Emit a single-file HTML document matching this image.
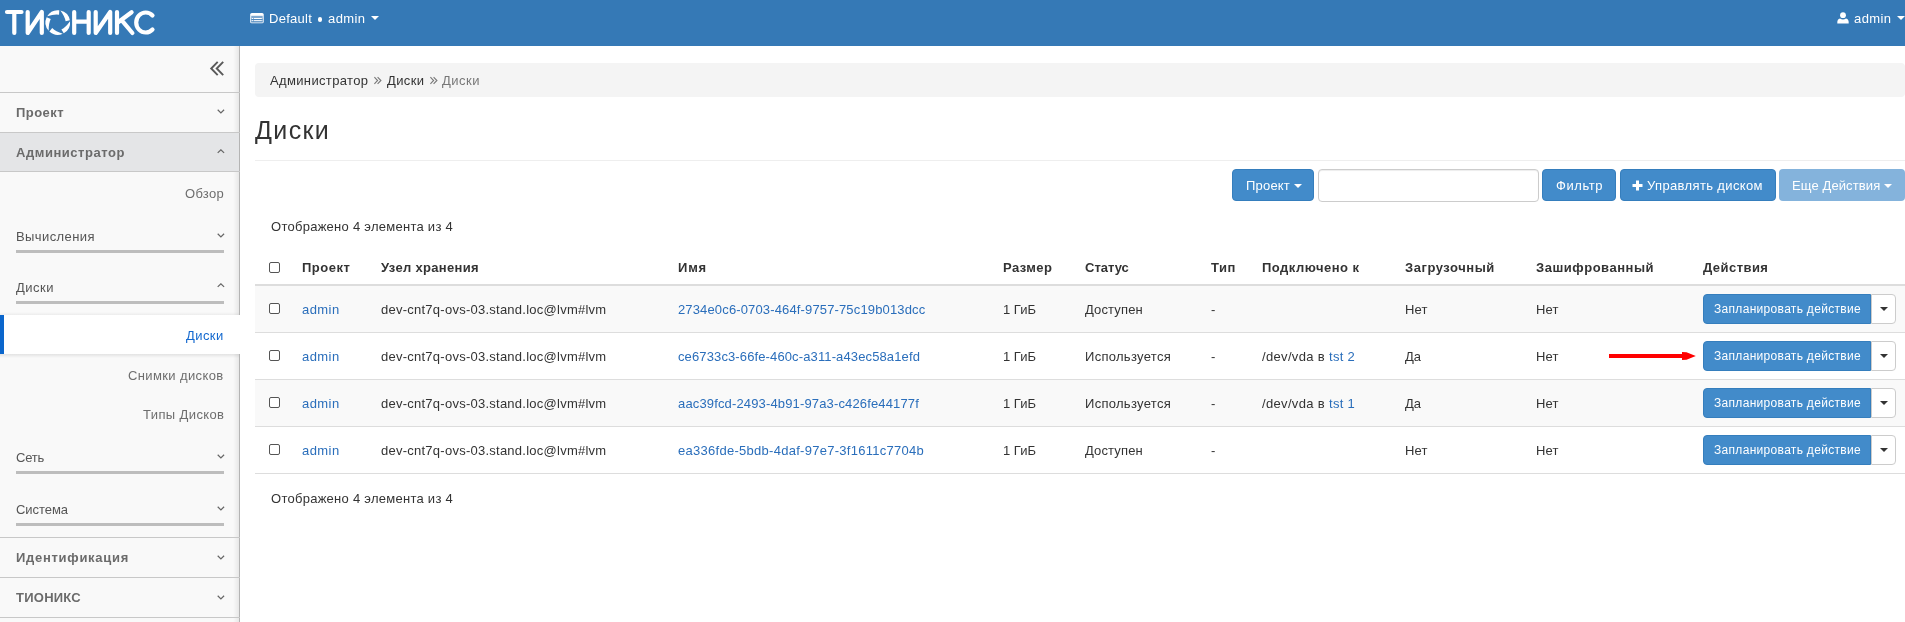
<!DOCTYPE html>
<html><head><meta charset="utf-8"><style>
html,body{margin:0;padding:0;}
body{width:1905px;height:622px;overflow:hidden;position:relative;background:#fff;font-family:"Liberation Sans",sans-serif;-webkit-font-smoothing:antialiased;}
.t{position:absolute;white-space:nowrap;will-change:transform;}
.r{position:absolute;}
</style></head><body>
<div class="r" style="left:0px;top:0px;width:1905px;height:46px;background:#3579b6;"></div>
<svg class="r" style="left:0;top:0" width="170" height="46" viewBox="0 0 170 46">
<g fill="none" stroke="#fff" stroke-width="4.2" stroke-linecap="round" stroke-linejoin="round">
<path d="M7 12 H21.5 M14.3 12 V33"/>
<path d="M27.7 12 V33 L41.8 12 V33"/>
<path d="M74.2 12 V33 M88.7 12 V33 M74.2 21.6 H88.7"/>
<path d="M95.7 12 V33 L110.2 12 V33"/>
<path d="M117 12 V33 M117.5 22.8 L131.6 12.2 M121.6 20.2 L132.4 33"/>
<path d="M152.5 15.5 A9.5 10 0 1 0 152.5 29.5"/>
</g>
<path fill="#fff" d="M48.66 30.73 A12.3 12.3 0 0 1 46.65 17.30 L50.76 18.91 Q48.53 23.23 48.66 30.73 Z M47.15 16.35 A12.3 12.3 0 0 1 59.30 10.29 L59.04 14.70 Q54.24 13.91 47.15 16.35 Z M60.36 10.47 A12.3 12.3 0 0 1 69.87 20.15 L65.60 21.26 Q64.87 16.46 60.36 10.47 Z M70.03 21.21 A12.3 12.3 0 0 1 63.76 33.26 L61.39 29.54 Q65.73 27.36 70.03 21.21 Z M62.80 33.74 A12.3 12.3 0 0 1 49.41 31.50 L52.21 28.09 Q55.63 31.54 62.80 33.74 Z"/>
</svg>
<svg class="r" style="left:250px;top:12.8px" width="14" height="11" viewBox="0 0 14 11"><rect x="0.2" y="0" width="13.5" height="10.3" rx="1.6" fill="#fff"/><rect x="1.2" y="2.8" width="11.5" height="6.5" fill="#7ea8d0"/><g fill="#fff"><rect x="3.8" y="5" width="8" height="1.1"/><rect x="3.8" y="7.2" width="8" height="1.1"/><rect x="1.9" y="5" width="1.1" height="1.1"/><rect x="1.9" y="7.2" width="1.1" height="1.1"/></g><g fill="#3a7ab5"><rect x="1.2" y="6.3" width="11.5" height="0.7"/><rect x="1.2" y="8.5" width="11.5" height="0.8"/></g></svg>
<div class="t" style="left:269.00px;top:12.00px;font-size:13px;line-height:13px;color:#fff;letter-spacing:0.287px;">Default</div>
<div class="r" style="left:317.6px;top:17px;width:4.6px;height:4.6px;background:#fff;border-radius:50%;"></div>
<div class="t" style="left:328.00px;top:12.00px;font-size:13px;line-height:13px;color:#fff;letter-spacing:0.418px;">admin</div>
<div class="r" style="left:371px;top:16px;width:0;height:0;border-left:4px solid transparent;border-right:4px solid transparent;border-top:4px solid #fff"></div>
<svg class="r" style="left:1837px;top:12px" width="12" height="12" viewBox="0 0 12 12"><circle cx="6" cy="3.2" r="2.9" fill="#fff"/><path d="M0.3 11.5 Q0 7 3 6.6 Q6 8.4 9 6.6 Q12 7 11.7 11.5 Z" fill="#fff"/></svg>
<div class="t" style="left:1854.00px;top:12.00px;font-size:13px;line-height:13px;color:#fff;letter-spacing:0.418px;">admin</div>
<div class="r" style="left:1897px;top:16px;width:0;height:0;border-left:4px solid transparent;border-right:4px solid transparent;border-top:4px solid #fff"></div>
<div class="r" style="left:0px;top:46px;width:240px;height:576px;background:#f9f9f9;"></div>
<div class="r" style="left:233px;top:46px;width:6px;height:576px;background:linear-gradient(to right, rgba(0,0,0,0), rgba(0,0,0,0.07));"></div>
<div class="r" style="left:239px;top:46px;width:1px;height:576px;background:#b4b4b4;"></div>
<svg class="r" style="left:204px;top:55px" width="26" height="27" viewBox="0 0 26 27"><g fill="none" stroke="#5a5a5a" stroke-width="1.9"><path d="M13.7 6.8 L7.2 13.5 L13.7 20.2"/><path d="M19.2 6.8 L12.7 13.5 L19.2 20.2"/></g></svg>
<div class="r" style="left:0px;top:92px;width:240px;height:1px;background:#c8c8c8;"></div>
<div class="t" style="left:16.00px;top:106.00px;font-size:13px;line-height:13px;color:#6b6b6b;letter-spacing:0.445px;font-weight:bold;">Проект</div>
<svg class="r" style="left:217px;top:109px" width="8" height="5" viewBox="0 0 8 5"><path d="M0.7 0.8 L3.9 3.9 L7.1 0.8" fill="none" stroke="#666" stroke-width="1.2"/></svg>
<div class="r" style="left:0px;top:132px;width:240px;height:1px;background:#c8c8c8;"></div>
<div class="r" style="left:0px;top:133px;width:239px;height:39px;background:#e4e5e7;"></div>
<div class="t" style="left:16.00px;top:146.00px;font-size:13px;line-height:13px;color:#6b6b6b;letter-spacing:0.543px;font-weight:bold;">Администратор</div>
<svg class="r" style="left:217px;top:149px" width="8" height="5" viewBox="0 0 8 5"><path d="M0.7 3.9 L3.9 0.8 L7.1 3.9" fill="none" stroke="#666" stroke-width="1.2"/></svg>
<div class="r" style="left:0px;top:171px;width:240px;height:1px;background:#c8c8c8;"></div>
<div class="t" style="left:185.00px;top:186.50px;font-size:13px;line-height:13px;color:#6e6e6e;letter-spacing:0.291px;">Обзор</div>
<div class="t" style="left:16.00px;top:229.90px;font-size:13px;line-height:13px;color:#555;letter-spacing:0.415px;">Вычисления</div>
<svg class="r" style="left:217px;top:233px" width="8" height="5" viewBox="0 0 8 5"><path d="M0.7 0.8 L3.9 3.9 L7.1 0.8" fill="none" stroke="#666" stroke-width="1.2"/></svg>
<div class="r" style="left:16px;top:250px;width:208px;height:3px;background:#bdbdbd;"></div>
<div class="t" style="left:16.00px;top:280.80px;font-size:13px;line-height:13px;color:#555;letter-spacing:0.497px;">Диски</div>
<svg class="r" style="left:217px;top:283px" width="8" height="5" viewBox="0 0 8 5"><path d="M0.7 3.9 L3.9 0.8 L7.1 3.9" fill="none" stroke="#666" stroke-width="1.2"/></svg>
<div class="r" style="left:16px;top:301px;width:208px;height:3px;background:#bdbdbd;"></div>
<div class="r" style="left:0px;top:312px;width:239px;height:3px;background:linear-gradient(to bottom, rgba(0,0,0,0), rgba(0,0,0,0.05));"></div>
<div class="r" style="left:0px;top:315px;width:240px;height:39px;background:#fff;z-index:2;"></div>
<div class="r" style="left:0px;top:354px;width:239px;height:4px;background:linear-gradient(to bottom, rgba(0,0,0,0.09), rgba(0,0,0,0));z-index:2;"></div>
<div class="r" style="left:0px;top:315px;width:4px;height:39px;background:#0b66cc;z-index:3;"></div>
<div class="t" style="left:186.40px;top:328.80px;font-size:13px;line-height:13px;color:#1469cf;letter-spacing:0.417px;z-index:4;">Диски</div>
<div class="t" style="left:128.40px;top:369.40px;font-size:13px;line-height:13px;color:#6e6e6e;letter-spacing:0.381px;">Снимки дисков</div>
<div class="t" style="left:142.60px;top:408.00px;font-size:13px;line-height:13px;color:#6e6e6e;letter-spacing:0.385px;">Типы Дисков</div>
<div class="t" style="left:16.00px;top:450.90px;font-size:13px;line-height:13px;color:#555;letter-spacing:-0.229px;">Сеть</div>
<svg class="r" style="left:217px;top:454px" width="8" height="5" viewBox="0 0 8 5"><path d="M0.7 0.8 L3.9 3.9 L7.1 0.8" fill="none" stroke="#666" stroke-width="1.2"/></svg>
<div class="r" style="left:16px;top:471px;width:208px;height:3px;background:#bdbdbd;"></div>
<div class="t" style="left:16.00px;top:503.20px;font-size:13px;line-height:13px;color:#555;letter-spacing:-0.051px;">Система</div>
<svg class="r" style="left:217px;top:506px" width="8" height="5" viewBox="0 0 8 5"><path d="M0.7 0.8 L3.9 3.9 L7.1 0.8" fill="none" stroke="#666" stroke-width="1.2"/></svg>
<div class="r" style="left:16px;top:523px;width:208px;height:3px;background:#bdbdbd;"></div>
<div class="r" style="left:0px;top:537px;width:240px;height:1px;background:#c8c8c8;"></div>
<div class="t" style="left:16.00px;top:551.40px;font-size:13px;line-height:13px;color:#6b6b6b;letter-spacing:0.715px;font-weight:bold;">Идентификация</div>
<svg class="r" style="left:217px;top:555px" width="8" height="5" viewBox="0 0 8 5"><path d="M0.7 0.8 L3.9 3.9 L7.1 0.8" fill="none" stroke="#666" stroke-width="1.2"/></svg>
<div class="r" style="left:0px;top:577px;width:240px;height:1px;background:#c8c8c8;"></div>
<div class="t" style="left:16.00px;top:590.60px;font-size:13px;line-height:13px;color:#6b6b6b;letter-spacing:0.246px;font-weight:bold;">ТИОНИКС</div>
<svg class="r" style="left:217px;top:595px" width="8" height="5" viewBox="0 0 8 5"><path d="M0.7 0.8 L3.9 3.9 L7.1 0.8" fill="none" stroke="#666" stroke-width="1.2"/></svg>
<div class="r" style="left:0px;top:617px;width:240px;height:1px;background:#c8c8c8;"></div>
<div class="r" style="left:255px;top:63px;width:1650px;height:34px;background:#f4f4f4;border-radius:4px;"></div>
<div class="t" style="left:270.00px;top:74.20px;font-size:13px;line-height:13px;color:#333;letter-spacing:0.354px;">Администратор</div>
<svg class="r" style="left:372px;top:75px" width="12" height="12" viewBox="0 0 12 12"><path d="M2.4 2.2 L5.6 5.5 L2.4 8.8 M5.6 2.2 L8.9 5.5 L5.6 8.8" fill="none" stroke="#777" stroke-width="1.1"/></svg>
<div class="t" style="left:387.00px;top:74.20px;font-size:13px;line-height:13px;color:#333;letter-spacing:0.377px;">Диски</div>
<svg class="r" style="left:427.5px;top:75px" width="12" height="12" viewBox="0 0 12 12"><path d="M2.4 2.2 L5.6 5.5 L2.4 8.8 M5.6 2.2 L8.9 5.5 L5.6 8.8" fill="none" stroke="#777" stroke-width="1.1"/></svg>
<div class="t" style="left:442.00px;top:74.20px;font-size:13px;line-height:13px;color:#777;letter-spacing:0.497px;">Диски</div>
<div class="t" style="left:255.00px;top:117.84px;font-size:25px;line-height:25px;color:#333;letter-spacing:1.380px;">Диски</div>
<div class="r" style="left:255px;top:160px;width:1650px;height:1px;background:#eee;"></div>
<div class="r" style="left:1232px;top:169px;width:82px;height:32px;background:#428bca;border:1px solid #357ebd;box-sizing:border-box;border-radius:4px;"></div>
<div class="t" style="left:1245.70px;top:179.00px;font-size:13px;line-height:13px;color:#fff;letter-spacing:0.196px;">Проект</div>
<div class="r" style="left:1294px;top:184px;width:0;height:0;border-left:4px solid transparent;border-right:4px solid transparent;border-top:4px solid #fff"></div>
<div class="r" style="left:1318px;top:169px;width:221px;height:33px;background:#fff;border:1px solid #ccc;box-sizing:border-box;border-radius:4px;box-shadow:inset 0 1px 1px rgba(0,0,0,.075);"></div>
<div class="r" style="left:1542px;top:169px;width:74px;height:32px;background:#428bca;border:1px solid #357ebd;box-sizing:border-box;border-radius:4px;"></div>
<div class="t" style="left:1555.80px;top:179.00px;font-size:13px;line-height:13px;color:#fff;letter-spacing:0.555px;">Фильтр</div>
<div class="r" style="left:1620px;top:169px;width:156px;height:32px;background:#428bca;border:1px solid #357ebd;box-sizing:border-box;border-radius:4px;"></div>
<div class="t" style="left:1646.50px;top:179.00px;font-size:13px;line-height:13px;color:#fff;letter-spacing:0.357px;">Управлять диском</div>
<svg class="r" style="left:1632px;top:180px" width="11" height="11" viewBox="0 0 11 11"><path d="M5.5 0.5 V10.5 M0.5 5.5 H10.5" stroke="#fff" stroke-width="3"/></svg>
<div class="r" style="left:1779px;top:169px;width:126px;height:32px;background:#84b3dc;border-radius:4px;"></div>
<div class="t" style="left:1792.30px;top:179.00px;font-size:13px;line-height:13px;color:#fff;letter-spacing:0.107px;">Еще Действия</div>
<div class="r" style="left:1884px;top:184px;width:0;height:0;border-left:4px solid transparent;border-right:4px solid transparent;border-top:4px solid #fff"></div>
<div class="t" style="left:270.50px;top:220.00px;font-size:13px;line-height:13px;color:#333;letter-spacing:0.266px;">Отображено 4 элемента из 4</div>
<div class="r" style="left:269px;top:262px;width:11px;height:11px;background:#fff;border:1px solid #555;box-sizing:border-box;border-radius:2px;"></div>
<div class="t" style="left:302.00px;top:261.00px;font-size:13px;line-height:13px;color:#333;letter-spacing:0.528px;font-weight:bold;">Проект</div>
<div class="t" style="left:381.00px;top:261.00px;font-size:13px;line-height:13px;color:#333;letter-spacing:0.327px;font-weight:bold;">Узел хранения</div>
<div class="t" style="left:678.00px;top:261.00px;font-size:13px;line-height:13px;color:#333;letter-spacing:0.818px;font-weight:bold;">Имя</div>
<div class="t" style="left:1002.60px;top:261.00px;font-size:13px;line-height:13px;color:#333;letter-spacing:0.414px;font-weight:bold;">Размер</div>
<div class="t" style="left:1084.50px;top:261.00px;font-size:13px;line-height:13px;color:#333;letter-spacing:-0.002px;font-weight:bold;">Статус</div>
<div class="t" style="left:1211.30px;top:261.00px;font-size:13px;line-height:13px;color:#333;letter-spacing:0.470px;font-weight:bold;">Тип</div>
<div class="t" style="left:1262.30px;top:261.00px;font-size:13px;line-height:13px;color:#333;letter-spacing:0.501px;font-weight:bold;">Подключено к</div>
<div class="t" style="left:1404.70px;top:261.00px;font-size:13px;line-height:13px;color:#333;letter-spacing:0.540px;font-weight:bold;">Загрузочный</div>
<div class="t" style="left:1536.30px;top:261.00px;font-size:13px;line-height:13px;color:#333;letter-spacing:0.523px;font-weight:bold;">Зашифрованный</div>
<div class="t" style="left:1703.00px;top:261.00px;font-size:13px;line-height:13px;color:#333;letter-spacing:0.449px;font-weight:bold;">Действия</div>
<div class="r" style="left:255px;top:284px;width:1650px;height:2px;background:#ddd;"></div>
<div class="r" style="left:255px;top:286px;width:1650px;height:46px;background:#f9f9f9;"></div>
<div class="r" style="left:255px;top:332px;width:1650px;height:1px;background:#ddd;"></div>
<div class="r" style="left:269px;top:303px;width:11px;height:11px;background:#fff;border:1px solid #555;box-sizing:border-box;border-radius:2px;"></div>
<div class="t" style="left:302.40px;top:303.00px;font-size:13px;line-height:13px;color:#2a6ebb;letter-spacing:0.438px;">admin</div>
<div class="t" style="left:381.20px;top:303.00px;font-size:13px;line-height:13px;color:#333;letter-spacing:0.249px;">dev-cnt7q-ovs-03.stand.loc@lvm#lvm</div>
<div class="t" style="left:678.20px;top:303.00px;font-size:13px;line-height:13px;color:#2a6ebb;letter-spacing:0.143px;">2734e0c6-0703-464f-9757-75c19b013dcc</div>
<div class="t" style="left:1002.60px;top:303.00px;font-size:13px;line-height:13px;color:#333;letter-spacing:0.011px;">1 ГиБ</div>
<div class="t" style="left:1084.50px;top:303.00px;font-size:13px;line-height:13px;color:#333;letter-spacing:0.146px;">Доступен</div>
<div class="t" style="left:1211.30px;top:303.00px;font-size:13px;line-height:13px;color:#333;letter-spacing:0.300px;">-</div>
<div class="t" style="left:1404.70px;top:303.00px;font-size:13px;line-height:13px;color:#333;letter-spacing:0.119px;">Нет</div>
<div class="t" style="left:1536.30px;top:303.00px;font-size:13px;line-height:13px;color:#333;letter-spacing:0.119px;">Нет</div>
<div class="r" style="left:1703px;top:294px;width:168px;height:30px;background:#428bca;border:1px solid #357ebd;box-sizing:border-box;border-radius:4px 0 0 4px;"></div>
<div class="t" style="left:1714.00px;top:302.74px;font-size:12px;line-height:12px;color:#fff;letter-spacing:0.312px;">Запланировать действие</div>
<div class="r" style="left:1871px;top:294px;width:25px;height:30px;background:#fff;border:1px solid #ccc;box-sizing:border-box;border-radius:0 4px 4px 0;"></div>
<div class="r" style="left:1880px;top:307px;width:0;height:0;border-left:4px solid transparent;border-right:4px solid transparent;border-top:4px solid #333"></div>
<div class="r" style="left:255px;top:379px;width:1650px;height:1px;background:#ddd;"></div>
<div class="r" style="left:269px;top:350px;width:11px;height:11px;background:#fff;border:1px solid #555;box-sizing:border-box;border-radius:2px;"></div>
<div class="t" style="left:302.40px;top:350.00px;font-size:13px;line-height:13px;color:#2a6ebb;letter-spacing:0.438px;">admin</div>
<div class="t" style="left:381.20px;top:350.00px;font-size:13px;line-height:13px;color:#333;letter-spacing:0.249px;">dev-cnt7q-ovs-03.stand.loc@lvm#lvm</div>
<div class="t" style="left:678.20px;top:350.00px;font-size:13px;line-height:13px;color:#2a6ebb;letter-spacing:0.123px;">ce6733c3-66fe-460c-a311-a43ec58a1efd</div>
<div class="t" style="left:1002.60px;top:350.00px;font-size:13px;line-height:13px;color:#333;letter-spacing:0.011px;">1 ГиБ</div>
<div class="t" style="left:1084.50px;top:350.00px;font-size:13px;line-height:13px;color:#333;letter-spacing:0.292px;">Используется</div>
<div class="t" style="left:1211.30px;top:350.00px;font-size:13px;line-height:13px;color:#333;letter-spacing:0.300px;">-</div>
<div class="t" style="left:1262.30px;top:350.00px;font-size:13px;line-height:13px;color:#333;letter-spacing:0.334px;">/dev/vda в</div>
<div class="t" style="left:1329.00px;top:350.00px;font-size:13px;line-height:13px;color:#2a6ebb;letter-spacing:0.287px;">tst 2</div>
<div class="t" style="left:1404.70px;top:350.00px;font-size:13px;line-height:13px;color:#333;letter-spacing:-0.167px;">Да</div>
<div class="t" style="left:1536.30px;top:350.00px;font-size:13px;line-height:13px;color:#333;letter-spacing:0.119px;">Нет</div>
<div class="r" style="left:1703px;top:341px;width:168px;height:30px;background:#428bca;border:1px solid #357ebd;box-sizing:border-box;border-radius:4px 0 0 4px;"></div>
<div class="t" style="left:1714.00px;top:349.74px;font-size:12px;line-height:12px;color:#fff;letter-spacing:0.312px;">Запланировать действие</div>
<div class="r" style="left:1871px;top:341px;width:25px;height:30px;background:#fff;border:1px solid #ccc;box-sizing:border-box;border-radius:0 4px 4px 0;"></div>
<div class="r" style="left:1880px;top:354px;width:0;height:0;border-left:4px solid transparent;border-right:4px solid transparent;border-top:4px solid #333"></div>
<div class="r" style="left:255px;top:380px;width:1650px;height:46px;background:#f9f9f9;"></div>
<div class="r" style="left:255px;top:426px;width:1650px;height:1px;background:#ddd;"></div>
<div class="r" style="left:269px;top:397px;width:11px;height:11px;background:#fff;border:1px solid #555;box-sizing:border-box;border-radius:2px;"></div>
<div class="t" style="left:302.40px;top:397.00px;font-size:13px;line-height:13px;color:#2a6ebb;letter-spacing:0.438px;">admin</div>
<div class="t" style="left:381.20px;top:397.00px;font-size:13px;line-height:13px;color:#333;letter-spacing:0.249px;">dev-cnt7q-ovs-03.stand.loc@lvm#lvm</div>
<div class="t" style="left:678.20px;top:397.00px;font-size:13px;line-height:13px;color:#2a6ebb;letter-spacing:0.149px;">aac39fcd-2493-4b91-97a3-c426fe44177f</div>
<div class="t" style="left:1002.60px;top:397.00px;font-size:13px;line-height:13px;color:#333;letter-spacing:0.011px;">1 ГиБ</div>
<div class="t" style="left:1084.50px;top:397.00px;font-size:13px;line-height:13px;color:#333;letter-spacing:0.292px;">Используется</div>
<div class="t" style="left:1211.30px;top:397.00px;font-size:13px;line-height:13px;color:#333;letter-spacing:0.300px;">-</div>
<div class="t" style="left:1262.30px;top:397.00px;font-size:13px;line-height:13px;color:#333;letter-spacing:0.334px;">/dev/vda в</div>
<div class="t" style="left:1329.00px;top:397.00px;font-size:13px;line-height:13px;color:#2a6ebb;letter-spacing:0.287px;">tst 1</div>
<div class="t" style="left:1404.70px;top:397.00px;font-size:13px;line-height:13px;color:#333;letter-spacing:-0.167px;">Да</div>
<div class="t" style="left:1536.30px;top:397.00px;font-size:13px;line-height:13px;color:#333;letter-spacing:0.119px;">Нет</div>
<div class="r" style="left:1703px;top:388px;width:168px;height:30px;background:#428bca;border:1px solid #357ebd;box-sizing:border-box;border-radius:4px 0 0 4px;"></div>
<div class="t" style="left:1714.00px;top:396.74px;font-size:12px;line-height:12px;color:#fff;letter-spacing:0.312px;">Запланировать действие</div>
<div class="r" style="left:1871px;top:388px;width:25px;height:30px;background:#fff;border:1px solid #ccc;box-sizing:border-box;border-radius:0 4px 4px 0;"></div>
<div class="r" style="left:1880px;top:401px;width:0;height:0;border-left:4px solid transparent;border-right:4px solid transparent;border-top:4px solid #333"></div>
<div class="r" style="left:255px;top:473px;width:1650px;height:1px;background:#ddd;"></div>
<div class="r" style="left:269px;top:444px;width:11px;height:11px;background:#fff;border:1px solid #555;box-sizing:border-box;border-radius:2px;"></div>
<div class="t" style="left:302.40px;top:444.00px;font-size:13px;line-height:13px;color:#2a6ebb;letter-spacing:0.438px;">admin</div>
<div class="t" style="left:381.20px;top:444.00px;font-size:13px;line-height:13px;color:#333;letter-spacing:0.249px;">dev-cnt7q-ovs-03.stand.loc@lvm#lvm</div>
<div class="t" style="left:678.20px;top:444.00px;font-size:13px;line-height:13px;color:#2a6ebb;letter-spacing:0.274px;">ea336fde-5bdb-4daf-97e7-3f1611c7704b</div>
<div class="t" style="left:1002.60px;top:444.00px;font-size:13px;line-height:13px;color:#333;letter-spacing:0.011px;">1 ГиБ</div>
<div class="t" style="left:1084.50px;top:444.00px;font-size:13px;line-height:13px;color:#333;letter-spacing:0.146px;">Доступен</div>
<div class="t" style="left:1211.30px;top:444.00px;font-size:13px;line-height:13px;color:#333;letter-spacing:0.300px;">-</div>
<div class="t" style="left:1404.70px;top:444.00px;font-size:13px;line-height:13px;color:#333;letter-spacing:0.119px;">Нет</div>
<div class="t" style="left:1536.30px;top:444.00px;font-size:13px;line-height:13px;color:#333;letter-spacing:0.119px;">Нет</div>
<div class="r" style="left:1703px;top:435px;width:168px;height:30px;background:#428bca;border:1px solid #357ebd;box-sizing:border-box;border-radius:4px 0 0 4px;"></div>
<div class="t" style="left:1714.00px;top:443.74px;font-size:12px;line-height:12px;color:#fff;letter-spacing:0.312px;">Запланировать действие</div>
<div class="r" style="left:1871px;top:435px;width:25px;height:30px;background:#fff;border:1px solid #ccc;box-sizing:border-box;border-radius:0 4px 4px 0;"></div>
<div class="r" style="left:1880px;top:448px;width:0;height:0;border-left:4px solid transparent;border-right:4px solid transparent;border-top:4px solid #333"></div>
<div class="t" style="left:270.50px;top:491.80px;font-size:13px;line-height:13px;color:#333;letter-spacing:0.266px;">Отображено 4 элемента из 4</div>
<svg class="r" style="left:1600px;top:340px" width="110" height="30" viewBox="0 0 110 30"><rect x="9" y="14" width="74" height="4" fill="#f00"/><path d="M82 12 L86.5 12.3 L95.8 16 L86.5 19.7 L82 20 Z" fill="#f00"/></svg>
</body></html>
